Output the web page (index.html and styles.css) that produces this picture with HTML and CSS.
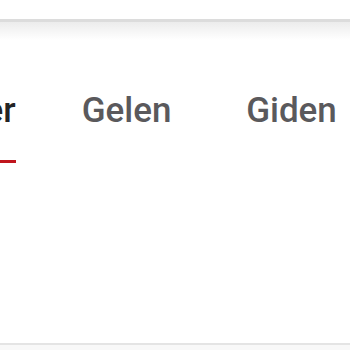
FILE: index.html
```html
<!DOCTYPE html>
<html lang="tr">
<head>
<meta charset="utf-8">
<link rel="stylesheet" href="styles.css">
</head>
<body>
<div class="page">
  <header class="topbar"></header>
  <nav class="tabs">
    <div class="tab tab-first active"><span class="label">İşlemler</span></div>
    <div class="tab"><span class="label">Gelen</span></div>
    <div class="tab"><span class="label">Giden</span></div>
  </nav>
  <main class="content"></main>
  <footer class="bottom"></footer>
</div>
</body>
</html>
```
FILE: styles.css
```css
html, body {
  margin: 0;
  padding: 0;
  background: #fff;
}
.page {
  width: 350px;
  height: 350px;
  display: flex;
  flex-direction: column;
  overflow: hidden;
  font-family: Roboto, "Liberation Sans", Arial, sans-serif;
}
.topbar {
  height: 19px;
  flex: none;
  background: #fff;
  border-bottom: 3px solid #dcdcdc;
  position: relative;
  z-index: 1;
}
.topbar::after {
  content: "";
  position: absolute;
  left: 0;
  right: 0;
  top: 100%;
  height: 18px;
  margin-top: 3px;
  background: linear-gradient(#ececec, rgba(255,255,255,0));
}
.tabs {
  flex: none;
  display: flex;
  margin-left: -139px;
  padding-top: 70px;
}
.tab {
  flex: none;
  width: 165px;
  display: flex;
  justify-content: center;
}
.tab-first {
  width: 183px;
}
.label {
  display: inline-block;
  font-size: 35px;
  font-weight: 500;
  line-height: 38px;
  color: #5a595c;
  padding-bottom: 30px;
  border-bottom: 3px solid transparent;
}
.tab.active .label {
  color: #242424;
  border-bottom-color: #c0151d;
}
.content {
  flex: 1;
}
.bottom {
  flex: none;
  height: 5px;
  border-top: 2px solid #e4e4e4;
  background: #f8f8f8;
}
```
